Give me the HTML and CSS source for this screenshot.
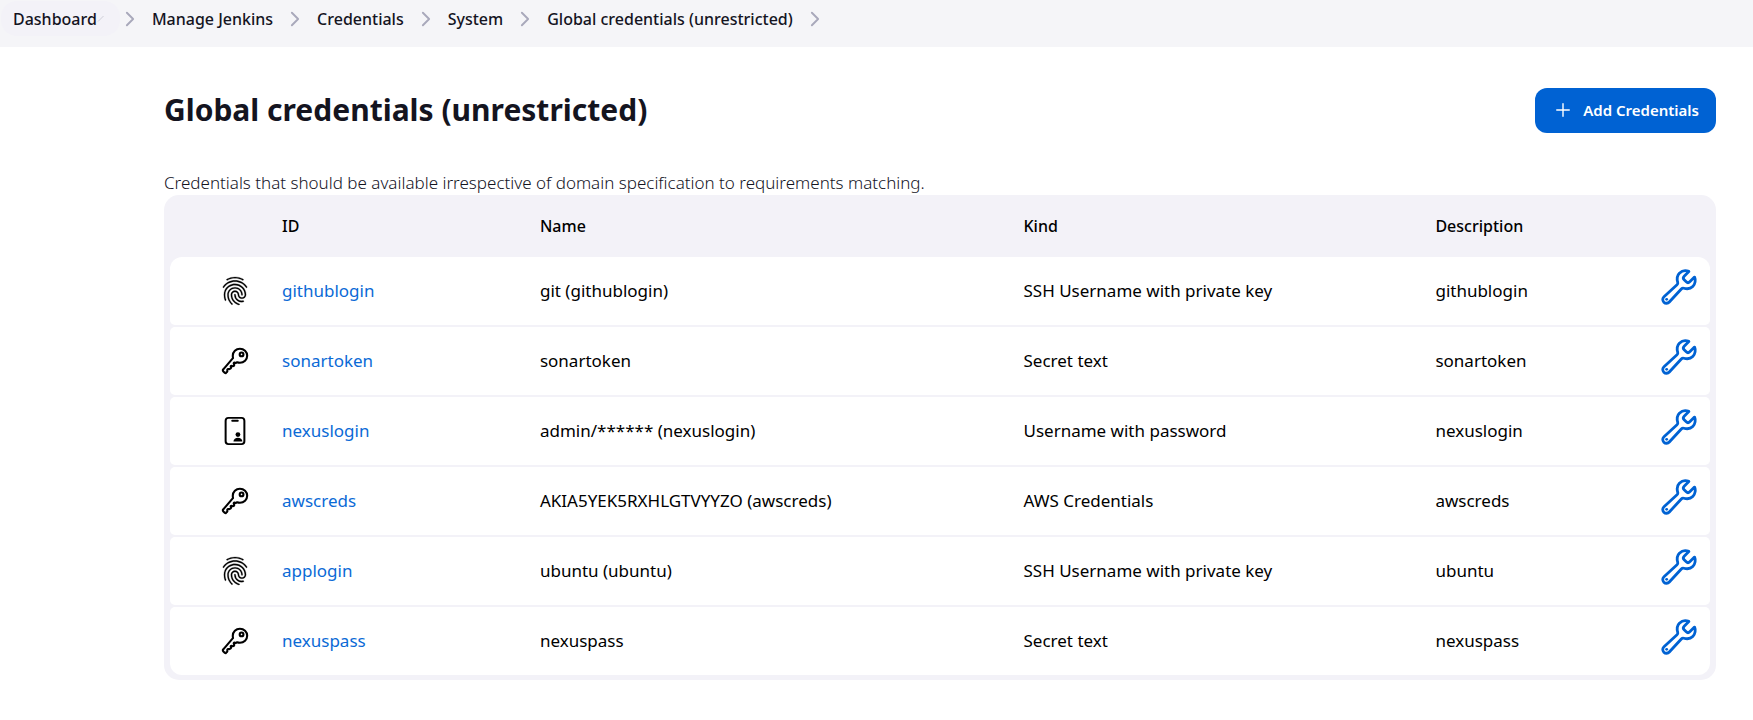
FILE: index.html
```html
<!DOCTYPE html>
<html lang="en">
<head>
<meta charset="utf-8">
<title>Global credentials (unrestricted) [Jenkins]</title>
<link rel="stylesheet" href="styles.css">
</head>
<body>
<svg class="sprite" aria-hidden="true">
  <symbol id="chevron" viewBox="0 0 512 512"><path d="M176 96l160 160-160 160" fill="none" stroke="currentColor" stroke-width="48" stroke-linecap="round" stroke-linejoin="round"/></symbol>
  <symbol id="plus" viewBox="0 0 512 512"><path d="M256 96v320M416 256H96" fill="none" stroke="currentColor" stroke-width="36" stroke-linecap="round" stroke-linejoin="round"/></symbol>
  <symbol id="fingerprint" viewBox="0 0 512 512"><path fill="currentColor" stroke="currentColor" stroke-width="4" d="M390.420 75.280a10.450 10.450 0 01-5.320-1.440C340.720 50.080 302.350 40 256.350 40c-45.770 0-89.230 11.280-128.760 33.840C122 77 115.110 74.800 111.870 69a12.400 12.400 0 014.630-16.320A281.810 281.810 0 01256.350 16c49.230 0 92.230 11.280 139.140 36.480a12 12 0 014.850 16.080 11.300 11.300 0 01-9.920 6.720zm-330.790 126.020a11.730 11.730 0 01-6.700-2.160 12.260 12.260 0 01-2.780-16.800c22.890-33.600 52-60 86.690-78.480 72.580-38.840 165.480-39.070 238.290-.24 34.680 18.480 63.800 44.640 86.690 78a12.290 12.290 0 01-2.780 16.800 11.260 11.260 0 01-16.180-2.880c-20.800-30.240-47.150-54-78.360-70.560-66.340-36-151.180-36-217.290.24-31.440 16.800-57.790 40.800-78.590 71a10 10 0 01-8.990 5.080zM204.150 491a10.660 10.660 0 01-8.090-3.600C175.950 466.480 165.090 453 149.600 424c-16-29.520-24.270-65.520-24.270-104.160 0-71.280 58.710-129.360 130.840-129.360S387 248.560 387 319.840a11.560 11.560 0 11-23.110 0c0-58.080-48.320-105.360-107.720-105.360s-107.720 47.280-107.720 105.360c0 34.560 7.390 66.480 21.490 92.400 14.800 27.600 25 39.360 42.770 58.080a12.670 12.670 0 010 17 12.440 12.440 0 01-8.560 3.680zm165.750-44.400c-27.510 0-51.780-7.200-71.660-21.360a129.100 129.100 0 01-55-105.360 11.570 11.570 0 1123.120 0 104.280 104.280 0 0044.840 85.440c16.410 11.520 35.600 17 58.720 17a147.410 147.410 0 0024-2.400c6.240-1.200 12.250 3.120 13.400 9.840a11.920 11.920 0 01-9.470 13.920 152.280 152.280 0 01-27.950 2.920zM323.380 496a13 13 0 01-3-.48c-36.760-10.560-60.800-24.720-86-50.400-32.370-33.360-50.160-77.760-50.160-125.280 0-38.880 31.900-70.560 71.190-70.560s71.200 31.680 71.200 70.560c0 25.680 21.500 46.560 48.080 46.560s48.080-20.880 48.080-46.560c0-90.480-75.130-163.920-167.590-163.920-65.650 0-125.750 37.920-152.790 96.720-9 19.440-13.640 42.240-13.640 67.200 0 18.720 1.610 48.240 15.480 86.640 2.320 6.240-.69 13.200-6.700 15.360a11.340 11.340 0 01-14.790-7 276.390 276.390 0 01-16.880-95c0-28.800 5.320-55 15.720-77.760 30.750-67.200 99.400-110.640 173.600-110.640 105.180 0 190.710 84.240 190.710 187.680 0 38.880-31.900 70.560-71.200 70.560s-71.200-31.680-71.200-70.560c.01-25.440-21.490-46.320-48.070-46.320s-48.080 20.880-48.080 46.560c0 41 15.260 79.440 43.230 108.240 22 22.560 43 35 75.590 44.160 6.240 1.680 9.710 8.400 8.090 14.640a11.390 11.390 0 01-10.870 9.120z"/></symbol>
  <symbol id="key" viewBox="0 0 512 512"><path d="M218.100 167.170c0 13 0 25.600 4.100 37.400-43.100 50.600-156.900 184.300-167.500 194.500a20.170 20.170 0 00-6.700 15c0 8.500 5.200 16.700 9.600 21.300 6.600 6.900 34.800 33 40 28 15.400-15 18.500-19 24.800-25.200 9.500-9.300-1-28.300 2.300-36s6.800-9.200 12.500-10.400 15.800 2.900 23.700 3c8.300.1 12.800-3.400 19-9.200 5-4.600 8.600-8.900 8.700-15.600.2-9-12.800-20.900-3.100-30.400s23.700 6.200 34 5 22.800-15.500 24.100-21.600-11.700-21.800-9.700-30.700c.7-3 6.800-10 11.400-11s25 6.900 29.600 5.900c5.600-1.200 12.100-7.100 17.400-10.400 15.500 6.700 29.600 9.400 47.700 9.400 68.500 0 124-53.400 124-119.200S408.500 48 340 48s-121.900 53.370-121.900 119.170zM400 144a32 32 0 11-32-32 32 32 0 0132 32z" fill="none" stroke="currentColor" stroke-width="36" stroke-linejoin="round"/></symbol>
  <symbol id="idcard" viewBox="0 0 512 512"><rect x="96" y="32" width="320" height="448" rx="48" fill="none" stroke="currentColor" stroke-width="34"/><path d="M208 82h96" fill="none" stroke="currentColor" stroke-width="32" stroke-linecap="round"/><circle cx="306" cy="317" r="41" fill="currentColor"/><path d="M230 437c0-44 36-67 76-67s76 23 76 67z" fill="currentColor"/></symbol>
  <symbol id="wrench" viewBox="0 0 512 512"><path d="M393.870 190a32.100 32.100 0 01-45.250 0l-26.570-26.570a32.090 32.090 0 010-45.260L382.190 58a1 1 0 00-.3-1.640c-38.820-16.640-89.150-8.160-121.110 23.570-30.580 30.350-32.320 76-21.120 115.840a31.930 31.930 0 01-9.060 32.080L64 380a48.170 48.170 0 1068 68l153.860-167a31.930 31.930 0 0131.600-9.130c39.540 10.590 84.540 8.600 114.720-21.190 32.490-32 39.500-88.560 23.750-120.930a1 1 0 00-1.600-.26z" fill="none" stroke="currentColor" stroke-width="36" stroke-linecap="round" stroke-miterlimit="10"/><circle cx="98" cy="414" r="18" fill="currentColor"/></symbol>
</svg>

<nav class="breadcrumbs" aria-label="Breadcrumb">
  <a class="crumb crumb-hover" href="#dashboard">Dashboard<svg class="crumb-tick" viewBox="0 0 8 8" aria-hidden="true"><path d="M1 6.500L6.500 1" fill="none" stroke="currentColor"/></svg></a>
  <svg class="separator" aria-hidden="true"><use href="#chevron"/></svg>
  <a class="crumb" href="#manage">Manage Jenkins</a>
  <svg class="separator" aria-hidden="true"><use href="#chevron"/></svg>
  <a class="crumb" href="#credentials">Credentials</a>
  <svg class="separator" aria-hidden="true"><use href="#chevron"/></svg>
  <a class="crumb" href="#system">System</a>
  <svg class="separator" aria-hidden="true"><use href="#chevron"/></svg>
  <a class="crumb" href="#global">Global credentials (unrestricted)</a>
  <svg class="separator" aria-hidden="true"><use href="#chevron"/></svg>
</nav>

<main class="content">
  <header class="app-bar">
    <h1 class="title">Global credentials (unrestricted)</h1>
    <button class="add-button" type="button"><svg class="add-icon" aria-hidden="true"><use href="#plus"/></svg>Add Credentials</button>
  </header>
  <p class="intro">Credentials that should be available irrespective of domain specification to requirements matching.</p>
  <div class="table-frame">
    <table class="credentials">
      <colgroup><col class="col-icon"><col class="col-id"><col class="col-name"><col class="col-kind"><col><col class="col-action"></colgroup>
      <thead>
        <tr><th></th><th scope="col">ID</th><th scope="col">Name</th><th scope="col">Kind</th><th scope="col">Description</th><th></th></tr>
      </thead>
      <tbody>
        <tr>
          <td class="type"><svg class="type-icon" aria-hidden="true"><use href="#fingerprint"/></svg></td>
          <td><a class="link" href="#githublogin">githublogin</a></td><td>git (githublogin)</td><td>SSH Username with private key</td><td>githublogin</td>
          <td class="action"><a class="update" href="#update-githublogin" aria-label="Update githublogin"><svg class="update-icon" aria-hidden="true"><use href="#wrench"/></svg></a></td>
        </tr>
        <tr>
          <td class="type"><svg class="type-icon" aria-hidden="true"><use href="#key"/></svg></td>
          <td><a class="link" href="#sonartoken">sonartoken</a></td><td>sonartoken</td><td>Secret text</td><td>sonartoken</td>
          <td class="action"><a class="update" href="#update-sonartoken" aria-label="Update sonartoken"><svg class="update-icon" aria-hidden="true"><use href="#wrench"/></svg></a></td>
        </tr>
        <tr>
          <td class="type"><svg class="type-icon" aria-hidden="true"><use href="#idcard"/></svg></td>
          <td><a class="link" href="#nexuslogin">nexuslogin</a></td><td>admin/****** (nexuslogin)</td><td>Username with password</td><td>nexuslogin</td>
          <td class="action"><a class="update" href="#update-nexuslogin" aria-label="Update nexuslogin"><svg class="update-icon" aria-hidden="true"><use href="#wrench"/></svg></a></td>
        </tr>
        <tr>
          <td class="type"><svg class="type-icon" aria-hidden="true"><use href="#key"/></svg></td>
          <td><a class="link" href="#awscreds">awscreds</a></td><td>AKIA5YEK5RXHLGTVYYZO (awscreds)</td><td>AWS Credentials</td><td>awscreds</td>
          <td class="action"><a class="update" href="#update-awscreds" aria-label="Update awscreds"><svg class="update-icon" aria-hidden="true"><use href="#wrench"/></svg></a></td>
        </tr>
        <tr>
          <td class="type"><svg class="type-icon" aria-hidden="true"><use href="#fingerprint"/></svg></td>
          <td><a class="link" href="#applogin">applogin</a></td><td>ubuntu (ubuntu)</td><td>SSH Username with private key</td><td>ubuntu</td>
          <td class="action"><a class="update" href="#update-applogin" aria-label="Update applogin"><svg class="update-icon" aria-hidden="true"><use href="#wrench"/></svg></a></td>
        </tr>
        <tr>
          <td class="type"><svg class="type-icon" aria-hidden="true"><use href="#key"/></svg></td>
          <td><a class="link" href="#nexuspass">nexuspass</a></td><td>nexuspass</td><td>Secret text</td><td>nexuspass</td>
          <td class="action"><a class="update" href="#update-nexuspass" aria-label="Update nexuspass"><svg class="update-icon" aria-hidden="true"><use href="#wrench"/></svg></a></td>
        </tr>
      </tbody>
    </table>
  </div>
</main>
</body>
</html>
```
FILE: styles.css
```css
* { box-sizing: border-box; }

body {
  margin: 0;
  background: #fff;
  color: #14141f;
  font-family: "Noto Sans", "Open Sans", sans-serif;
  font-size: 16px;
  line-height: 24px;
}

.sprite { position: absolute; width: 0; height: 0; }

.breadcrumbs {
  display: flex;
  align-items: flex-start;
  background: #f5f5f8;
  padding: 1px 0 11px 1px;
}

.crumb {
  display: flex;
  align-items: center;
  padding: 6px 12px 5px;
  border-radius: 16px;
  color: inherit;
  font-weight: 500;
  text-decoration: none;
  white-space: nowrap;
}

.crumb-hover { padding-right: 15px; background: #f3f2f8; }
.crumb-tick { width: 8px; height: 8px; color: #cfcfd8; }
.separator { flex: none; width: 20px; height: 20px; margin-top: 8px; color: #a9a9bb; }

.content { padding: 40px 37px 40px 164px; }

.app-bar {
  display: flex;
  align-items: center;
  justify-content: space-between;
  margin-bottom: 38px;
}

.title { margin: 0; font-size: 30px; line-height: 46px; font-weight: 700; }

.add-button {
  display: flex;
  align-items: center;
  gap: 10px;
  height: 45px;
  padding: 0 17px 0 18px;
  border: 0;
  border-radius: 12px;
  background: #0062d3;
  color: #fff;
  font: inherit;
  font-size: 15px;
  font-weight: 600;
}

.add-icon { width: 20px; height: 20px; }

.intro { margin: 0; font-weight: 300; font-size: 17px; }

.table-frame {
  padding: 0 6px 3px;
  border-radius: 15px;
  background: #f3f2f8;
}

.credentials {
  width: 100%;
  table-layout: fixed;
  border-collapse: separate;
  border-spacing: 0 2px;
  color: #000;
}

.col-icon { width: 92px; }
.col-id { width: 16.750%; }
.col-name { width: 31.400%; }
.col-kind { width: 26.750%; }
.col-action { width: 80px; }

.credentials th {
  height: 58px;
  padding: 0 0 0 20px;
  text-align: left;
  font-weight: 500;
}

.credentials td {
  height: 68px;
  padding: 0 0 0 20px;
  background: #fff;
  font-size: 17px;
}

.credentials td:first-child { border-radius: 5px 0 0 5px; }
.credentials td:last-child { border-radius: 0 5px 5px 0; }
.credentials tbody tr:first-child td:first-child { border-top-left-radius: 12px; }
.credentials tbody tr:first-child td:last-child { border-top-right-radius: 12px; }
.credentials tbody tr:last-child td:first-child { border-bottom-left-radius: 12px; }
.credentials tbody tr:last-child td:last-child { border-bottom-right-radius: 12px; }

.credentials .type { padding: 0 12px 0 0; }
.type-icon { display: block; width: 30px; height: 30px; margin-left: auto; }

.link { color: #0b6ad6; text-decoration: none; }

.credentials .action { padding: 0 11px 8px 0; }
.update { display: block; width: 40px; margin-left: auto; color: #0062d3; }
.update-icon { display: block; width: 40px; height: 40px; }
```
